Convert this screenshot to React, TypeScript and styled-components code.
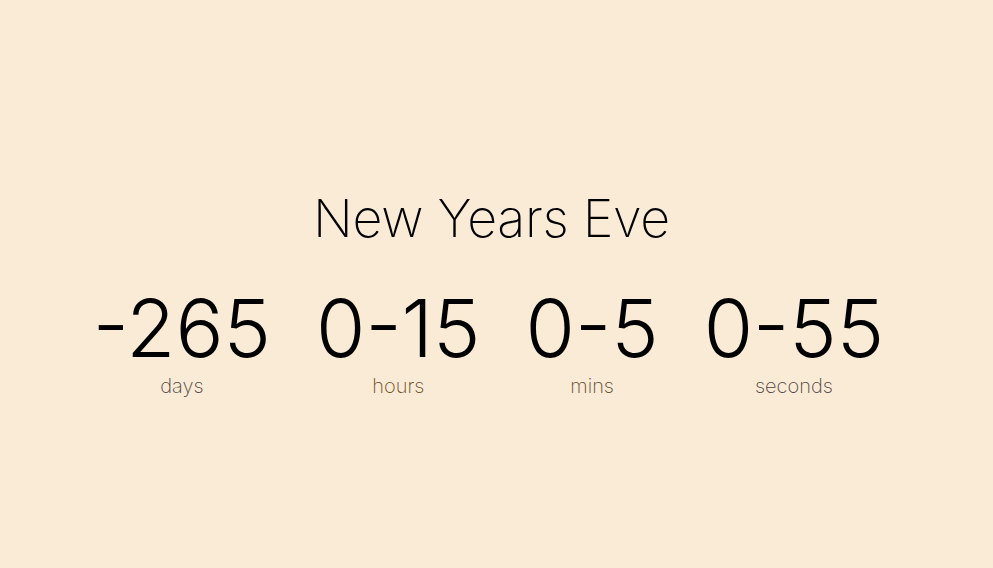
import React from "react";
import styled, { createGlobalStyle } from "styled-components";

const Global = createGlobalStyle`
  html, body { margin: 0; padding: 0; }
  body {
    background: #faebd7;
    font-family: Inter, "Noto Sans", sans-serif;
    color: #000;
  }
`;

const Page = styled.main`
  height: 568px;
  display: flex;
  flex-direction: column;
  align-items: center;
  padding: 187px 10px 0 0;
  box-sizing: border-box;
`;

const Title = styled.h1`
  margin: 0;
  font-size: 52px;
  font-weight: 200;
  line-height: normal;
  letter-spacing: -0.3px;
`;

const Row = styled.div`
  display: flex;
  justify-content: center;
  gap: 45px;
  margin-top: 29px;
  margin-left: -6px;
`;

const Unit = styled.div`
  display: flex;
  flex-direction: column;
  align-items: center;
`;

const Value = styled.span`
  font-size: 80px;
  font-weight: 300;
  line-height: normal;
`;

const Label = styled.span<{ $tint: string }>`
  font-size: 20px;
  font-weight: 200;
  line-height: normal;
  margin-top: -2px;
  color: ${(p) => p.$tint};
`;

const units = [
  { value: "-265", label: "days", tint: "#4e4440" },
  { value: "0-15", label: "hours", tint: "#6e4c1c" },
  { value: "0-5", label: "mins", tint: "#5e4a30" },
  { value: "0-55", label: "seconds", tint: "#4e4440" },
];

export default function App() {
  return (
    <>
      <Global />
      <Page>
        <Title>New Years Eve</Title>
        <Row>
          {units.map((u) => (
            <Unit key={u.label}>
              <Value>{u.value}</Value>
              <Label $tint={u.tint}>{u.label}</Label>
            </Unit>
          ))}
        </Row>
      </Page>
    </>
  );
}
